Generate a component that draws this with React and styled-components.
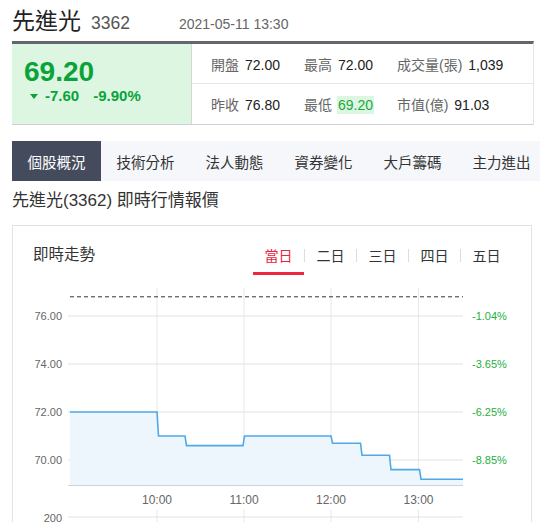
import React from 'react';
import styled, { createGlobalStyle } from 'styled-components';

const GlobalStyle = createGlobalStyle`
    body {
        margin: 0;
        background: #fff;
        font-family: "Liberation Sans", "Noto Sans CJK TC", sans-serif;
        color: #333;
    }
`

const Page = styled.div`
    width: 540px;
    height: 522px;
    padding-left: 12px;
    box-sizing: border-box;
    overflow: hidden;
`

const Header = styled.div`
    display: flex;
    align-items: baseline;
    height: 41px;
    line-height: 42px;
    white-space: nowrap;
`

const StockName = styled.span`
    font-size: 23px;
    color: #222;
`

const StockCode = styled.span`
    font-size: 17.5px;
    color: #555;
    margin-left: 10px;
`

const StockTime = styled.span`
    font-size: 14px;
    color: #666;
    margin-left: 49px;
`

const Quote = styled.div`
    display: flex;
    width: 521px;
    height: 80px;
    border-top: 3px solid #63666c;
    border-bottom: 1px solid #d0d0d0;
    border-right: 1px solid #e4e4e4;
`

const PriceBox = styled.div`
    width: 180px;
    background: #dcf6e2;
    border-right: 1px solid #d6d6d6;
    padding: 13px 0 0 12px;
    box-sizing: border-box;
    color: #0aa33a;
`

const Price = styled.div`
    font-size: 28px;
    font-weight: bold;
    line-height: 30px;
`

const Change = styled.div`
    display: flex;
    align-items: center;
    font-size: 15px;
    font-weight: bold;
    line-height: 18px;
    padding-left: 6px;
    gap: 14px;
`

const DownArrow = styled.span`
    width: 0;
    height: 0;
    border-left: 4px solid transparent;
    border-right: 4px solid transparent;
    border-top: 5px solid #0aa33a;
    margin-right: -7px;
`

const Stats = styled.div`
    flex: 1;
    display: flex;
    flex-direction: column;
`

const StatRow = styled.div`
    display: flex;
    align-items: center;
    height: 40px;
    padding-left: 19px;
    border-bottom: ${p => p.$last ? 'none' : '1px solid #e6e6e6'};
    box-sizing: border-box;
`

const StatCell = styled.div`
    width: ${p => p.$wide ? 'auto' : '93px'};
    font-size: 14px;
    white-space: nowrap;
`

const StatLabel = styled.span`
    color: #666;
`

const StatValue = styled.span`
    color: #222;
    margin-left: 5px;
    padding: 1px 1px;
    background: ${p => p.$hl ? '#dcf6e2' : 'transparent'};
    color: ${p => p.$hl ? '#1aa83c' : '#222'};
`

const TabBar = styled.div`
    display: flex;
    height: 40px;
    margin-top: 16px;
    background: #f5f7fa;
    white-space: nowrap;
    width: 600px;
`

const Tab = styled.div`
    display: flex;
    align-items: center;
    padding: 0 15.5px;
    font-size: 14.5px;
    color: ${p => p.$active ? '#fff' : '#333'};
    background: ${p => p.$active ? '#444b5d' : 'transparent'};
`

const SectionTitle = styled.h2`
    margin: 7px 0 11px;
    font-size: 17px;
    font-weight: normal;
    line-height: 26px;
    color: #333;
`

const Card = styled.div`
    width: 520px;
    border: 1px solid #e3e3e3;
    border-bottom: none;
    box-sizing: border-box;
`

const CardHeader = styled.div`
    display: flex;
    justify-content: space-between;
    align-items: flex-start;
    padding: 12px 19px 0 20px;
`

const CardTitle = styled.div`
    font-size: 15.5px;
    line-height: 34px;
    color: #333;
`

const RangeTabs = styled.div`
    display: flex;
`

const RangeTab = styled.div`
    width: 51px;
    height: 34px;
    display: flex;
    align-items: center;
    justify-content: center;
    font-size: 14px;
    color: ${p => p.$active ? '#e8233b' : '#333'};
    border-bottom: 3px solid ${p => p.$active ? '#f0263f' : 'transparent'};
`

const RangeSep = styled.div`
    width: 1px;
    height: 13px;
    margin-top: 11px;
    background: #dcdcdc;
`

const ChartSvg = styled.svg`
    display: block;
    font-family: "Liberation Sans", sans-serif;
`

const stats = [
    [['開盤', '72.00'], ['最高', '72.00'], ['成交量(張)', '1,039']],
    [['昨收', '76.80'], ['最低', '69.20', true], ['市值(億)', '91.03']],
]

const tabs = ['個股概況', '技術分析', '法人動態', '資券變化', '大戶籌碼', '主力進出']
const ranges = ['當日', '二日', '三日', '四日', '五日']

const yTicks = [
    { y: 316, price: '76.00', pct: '-1.04%' },
    { y: 364, price: '74.00', pct: '-3.65%' },
    { y: 412, price: '72.00', pct: '-6.25%' },
    { y: 460, price: '70.00', pct: '-8.85%' },
]

const xTicks = [
    { x: 157, label: '10:00' },
    { x: 244, label: '11:00' },
    { x: 331, label: '12:00' },
    { x: 418.5, label: '13:00' },
]

// price steps through the day, in page coordinates
const points = [
    [70, 412], [157, 412], [158.5, 436], [185, 436], [186.5, 445.6], [243, 445.6],
    [244.5, 436], [331, 436], [332.5, 443.2], [360.5, 443.2], [362, 455.2],
    [389.5, 455.2], [391, 469.6], [419.5, 469.6], [421, 479.2], [463, 479.2],
]

function Chart() {
    const line = points.map((p, i) => (i ? 'L' : 'M') + p[0] + ' ' + p[1]).join(' ')
    const area = line + ' L463 485 L70 485 Z'
    return (
        <ChartSvg width="518" height="250" viewBox="13 275 518 250">
            {xTicks.map(t => (
                <g key={t.label}>
                    <line x1={t.x} x2={t.x} y1="288" y2="485" stroke="#e8e8e8" />
                    <line x1={t.x} x2={t.x} y1="510" y2="525" stroke="#e8e8e8" />
                </g>
            ))}
            {yTicks.map(t => (
                <g key={t.price}>
                    <line x1="68" x2="463" y1={t.y} y2={t.y} stroke="#e2e2e2" />
                    <text x="62" y={t.y + 4} fontSize="11" fill="#666" textAnchor="end">{t.price}</text>
                    <text x="472" y={t.y + 4} fontSize="11" fill="#1fb03e">{t.pct}</text>
                </g>
            ))}
            <path d={area} fill="#eef6fd" />
            <path d={line} fill="none" stroke="#4ea9e6" strokeWidth="1.6" />
            <line x1="70" x2="463" y1="296.8" y2="296.8" stroke="#333" strokeDasharray="4 3" />
            <line x1="68" x2="463" y1="485.5" y2="485.5" stroke="#ccd3df" />
            {xTicks.map(t => (
                <text key={t.label} x={t.x} y="504" fontSize="12" fill="#666" textAnchor="middle">{t.label}</text>
            ))}
            <line x1="68" x2="463" y1="517" y2="517" stroke="#e2e2e2" />
            <text x="62" y="522" fontSize="11" fill="#666" textAnchor="end">200</text>
        </ChartSvg>
    )
}

function App() {
    return (
        <Page>
            <GlobalStyle />
            <Header>
                <StockName>先進光</StockName>
                <StockCode>3362</StockCode>
                <StockTime>2021-05-11 13:30</StockTime>
            </Header>
            <Quote>
                <PriceBox>
                    <Price>69.20</Price>
                    <Change>
                        <DownArrow />
                        <span>-7.60</span>
                        <span>-9.90%</span>
                    </Change>
                </PriceBox>
                <Stats>
                    {stats.map((row, i) => (
                        <StatRow key={i} $last={i === stats.length - 1}>
                            {row.map(([label, value, hl], j) => (
                                <StatCell key={label} $wide={j === 2}>
                                    <StatLabel>{label}</StatLabel>
                                    <StatValue $hl={hl}>{value}</StatValue>
                                </StatCell>
                            ))}
                        </StatRow>
                    ))}
                </Stats>
            </Quote>
            <TabBar>
                {tabs.map((t, i) => <Tab key={t} $active={i === 0}>{t}</Tab>)}
            </TabBar>
            <SectionTitle>先進光(3362) 即時行情報價</SectionTitle>
            <Card>
                <CardHeader>
                    <CardTitle>即時走勢</CardTitle>
                    <RangeTabs>
                        {ranges.map((r, i) => (
                            <React.Fragment key={r}>
                                {i > 0 && <RangeSep />}
                                <RangeTab $active={i === 0}>{r}</RangeTab>
                            </React.Fragment>
                        ))}
                    </RangeTabs>
                </CardHeader>
                <Chart />
            </Card>
        </Page>
    )
}

export default App
